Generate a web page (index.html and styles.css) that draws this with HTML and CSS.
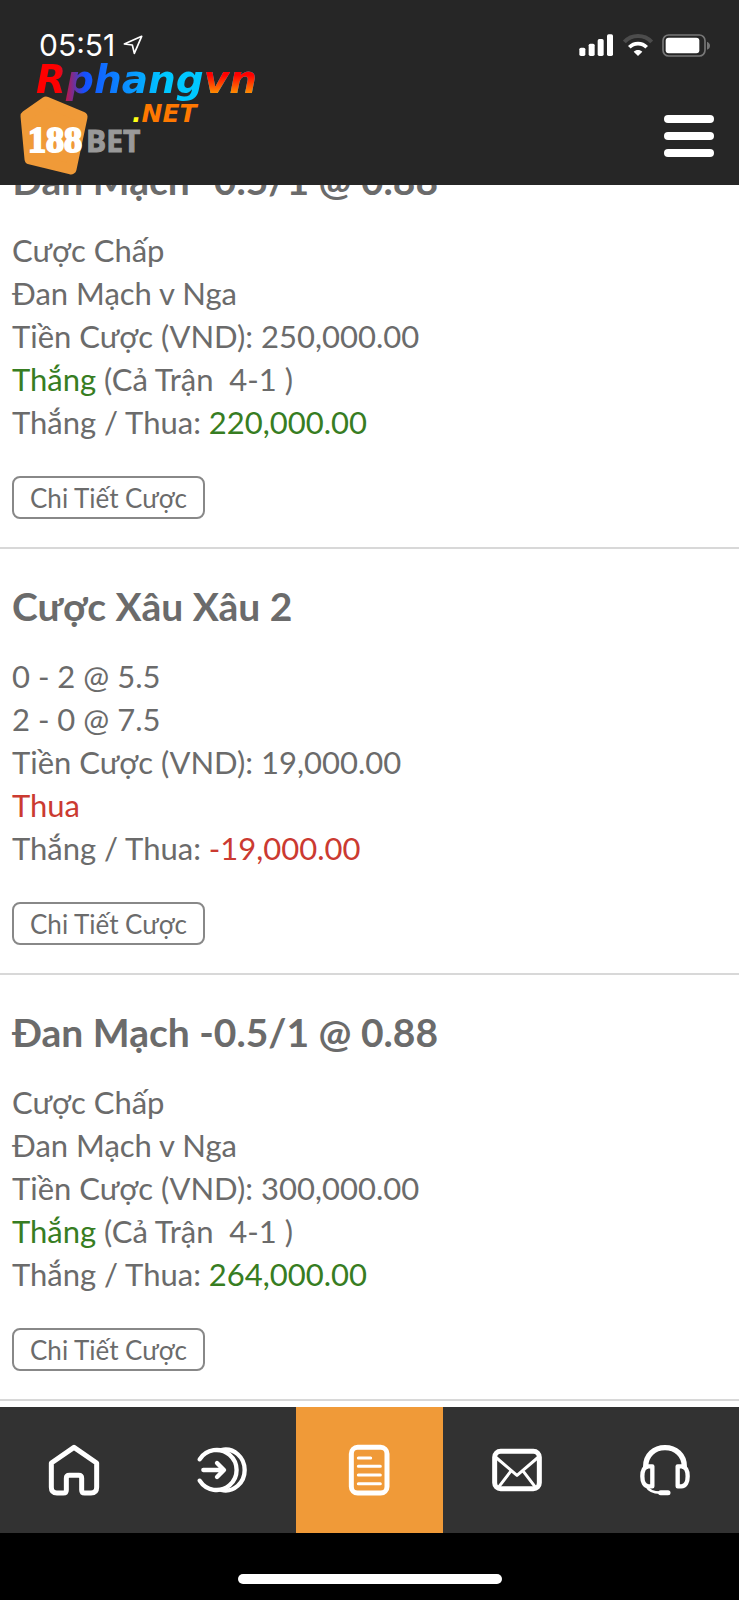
FILE: index.html
```
<!DOCTYPE html>
<html lang="vi">
<head>
    <title>188BET</title>
    <meta charset="UTF-8">
    <meta name="viewport" content="width=device-width, initial-scale=1.0">
    <link rel="stylesheet" href="styles.css">
</head>
<body>

<header class="header">
    <div class="status">
        <span class="clock">05:51</span>
        <svg class="location" viewBox="0 0 60 60" width="20" height="20"><path d="M56 4 L4 27 L28 30 L34 55 Z" fill="none" stroke="#fff" stroke-width="5" stroke-linejoin="round"/></svg>
        <div class="status-icons">
            <svg viewBox="0 0 105 66" width="35" height="22" fill="#fff">
                <rect x="1" y="41" width="18" height="25" rx="5"/>
                <rect x="29" y="29" width="18" height="37" rx="5"/>
                <rect x="56" y="15" width="18" height="51" rx="5"/>
                <rect x="84" y="1" width="18" height="65" rx="5"/>
            </svg>
            <svg viewBox="0 0 90 66" width="30" height="22">
                <path d="M4 24 C26 0 64 0 86 24" fill="none" stroke="#4c4c4c" stroke-width="12"/>
                <path d="M19 40 C33 25 57 25 71 40" fill="none" stroke="#fff" stroke-width="11"/>
                <path d="M45 66 L32 53 C39 46 51 46 58 53 Z" fill="#fff"/>
            </svg>
            <svg viewBox="0 0 147 69" width="49" height="23">
                <rect x="3" y="3" width="126" height="63" rx="17" fill="none" stroke="#777" stroke-width="5"/>
                <rect x="11" y="11" width="101" height="47" rx="9" fill="#fff"/>
                <path d="M135 23 C147 27 147 43 135 47 Z" fill="#777"/>
            </svg>
        </div>
    </div>
    <div class="brand-row">
        <a class="logo" href="#" aria-label="188BET">
            <svg viewBox="0 0 130 84" width="130" height="84">
                <path d="M26 8 L62 23 L51 75 L10 65 L6 22 Z" fill="#f09a38" stroke="#f09a38" stroke-width="11" stroke-linejoin="round"/>
                <text class="logo-num" x="8" y="58">188</text>
                <text class="logo-bet" x="66" y="58">BET</text>
            </svg>
        </a>
        <button class="menu" aria-label="Menu"><span></span><span></span><span></span></button>
    </div>
    <div class="watermark">
        <span class="wm-name">Rphang<b>vn</b></span>
        <span class="wm-net"><i>.</i>NET</span>
    </div>
</header>

<main class="bets">
    <div class="list">
        <article class="bet">
            <h2>Đan Mạch -0.5/1 @ 0.88</h2>
            <p>Cược Chấp</p>
            <p>Đan Mạch v Nga</p>
            <p>Tiền Cược (VND): 250,000.00</p>
            <p><span class="win">Thắng</span> (Cả Trận&nbsp; 4-1 )</p>
            <p>Thắng / Thua: <span class="win">220,000.00</span></p>
            <button class="detail">Chi Tiết Cược</button>
        </article>
        <article class="bet">
            <h2>Cược Xâu Xâu 2</h2>
            <p>0 - 2 @ 5.5</p>
            <p>2 - 0 @ 7.5</p>
            <p>Tiền Cược (VND): 19,000.00</p>
            <p><span class="lose">Thua</span></p>
            <p>Thắng / Thua: <span class="lose">-19,000.00</span></p>
            <button class="detail">Chi Tiết Cược</button>
        </article>
        <article class="bet">
            <h2>Đan Mạch -0.5/1 @ 0.88</h2>
            <p>Cược Chấp</p>
            <p>Đan Mạch v Nga</p>
            <p>Tiền Cược (VND): 300,000.00</p>
            <p><span class="win">Thắng</span> (Cả Trận&nbsp; 4-1 )</p>
            <p>Thắng / Thua: <span class="win">264,000.00</span></p>
            <button class="detail">Chi Tiết Cược</button>
        </article>
    </div>
</main>

<nav class="tabs">
    <a href="#" aria-label="Home">
        <svg viewBox="0 0 156 156" stroke-width="15">
            <path d="M78 10 L10 57 V130 Q10 147 27 147 H46 Q55 147 55 138 V103 Q55 94 64 94 H92 Q101 94 101 103 V138 Q101 147 110 147 H129 Q146 147 146 130 V57 Z"/>
        </svg>
    </a>
    <a href="#" aria-label="Login">
        <svg viewBox="0 0 156 156" stroke-width="13">
            <path d="M11 46 A60 60 0 1 1 11 110"/>
            <path d="M76 18 C114 10 146 40 146 78 C146 116 114 146 76 138"/>
            <path d="M22 78 H82 M63 57 L84 78 L63 99"/>
        </svg>
    </a>
    <a class="active" href="#" aria-label="Bets">
        <svg viewBox="0 0 156 156" stroke-width="15">
            <rect x="25" y="10" width="107" height="137" rx="19"/>
            <path d="M46 42 H83 M46 67 H112 M46 93 H112 M46 119 H112" stroke-width="9"/>
        </svg>
    </a>
    <a href="#" aria-label="Messages">
        <svg viewBox="0 0 156 156" stroke-width="15">
            <rect x="11" y="22" width="134" height="112" rx="18"/>
            <path d="M17 42 L78 94 L139 42 M24 128 L59 82 M132 128 L97 82" stroke-width="9"/>
        </svg>
    </a>
    <a href="#" aria-label="Support">
        <svg viewBox="0 0 156 156" stroke-width="13">
            <path d="M20 68 C20 33 46 11 78 11 C110 11 136 33 136 68" stroke-width="16"/>
            <path d="M40 67 H29 C16 67 10 80 10 97 C10 114 16 127 29 127 H40 Z"/>
            <path d="M116 67 H127 C140 67 146 80 146 97 C146 114 140 127 127 127 H116 Z"/>
            <path d="M24 128 C30 142 44 145 64 146" stroke-width="8"/>
            <path d="M65 146 H87" stroke-width="15"/>
        </svg>
    </a>
</nav>

<footer class="home-bar"><span></span></footer>

</body>
</html>
```

FILE: styles.css
```
* {
    box-sizing: border-box;
}

body {
    font-family: Lato, "Liberation Sans", sans-serif;
    margin: 0;
    display: flex;
    flex-direction: column;
    height: 100vh;
    background-color: #fff;
    color: #6b6b6b;
}

/* Header */
.header {
    position: relative;
    flex: none;
    padding-top: 28px;
    background-color: #262626;
}

.status {
    display: flex;
    align-items: center;
    height: 34px;
    padding: 0 28px 0 39px;
    color: #fff;
}

.clock {
    font-family: Inter, sans-serif;
    font-size: 30px;
    line-height: 34px;
}

.location {
    margin-left: 8px;
}

.status-icons {
    display: flex;
    align-items: center;
    gap: 9px;
    margin-left: auto;
}

.brand-row {
    display: flex;
    align-items: center;
    justify-content: space-between;
    padding: 32px 25px 7px 20px;
}

.logo svg {
    display: block;
}

.logo-num {
    font-family: "Liberation Serif", serif;
    font-weight: bold;
    font-size: 36px;
    fill: #fff;
    stroke: #fff;
    stroke-width: 2;
}

.logo-bet {
    font-family: "Open Sans", sans-serif;
    font-weight: bold;
    font-size: 30px;
    fill: #999;
    stroke: #999;
    stroke-width: 1;
}

.menu {
    display: flex;
    flex-direction: column;
    gap: 9px;
    width: 50px;
    padding: 0;
    border: none;
    background: none;
    cursor: pointer;
}

.menu span {
    height: 8px;
    width: 100%;
    border-radius: 4px;
    background-color: #fff;
}

/* Site stamp over the header */
.watermark {
    position: absolute;
    top: 56px;
    left: 36px;
    display: flex;
    flex-direction: column;
    font-family: "DejaVu Sans", sans-serif;
    font-style: italic;
    font-weight: bold;
}

.wm-name,
.wm-name b {
    font-size: 39px;
    line-height: 48px;
    background: linear-gradient(90deg, #f00 0 10%, #1450ff 22%, #00c8ff 58%);
    -webkit-background-clip: text;
    background-clip: text;
    color: transparent;
}

.wm-name b {
    background-image: linear-gradient(#f00 40%, #ff8c00 80%);
}

.wm-net {
    margin-left: 96px;
    font-size: 25px;
    line-height: 20px;
    color: #ff7800;
}

.wm-net i {
    color: #ffff14;
}

/* Bet list, opens scrolled to the last bet */
.bets {
    flex: 1;
    min-height: 0;
    display: flex;
    flex-direction: column-reverse;
    overflow-y: auto;
    scrollbar-width: none;
    padding-bottom: 6px;
}

.bet {
    padding: 33px 12px 28px;
    border-bottom: 2px solid #d8d8d8;
}

.bet h2 {
    margin: 0 0 25px;
    font-size: 39px;
    line-height: 48px;
}

.bet p {
    margin: 0;
    font-size: 31px;
    line-height: 43px;
}

.win {
    color: #377d22;
}

.lose {
    color: #cb3a31;
}

.detail {
    display: block;
    height: 43px;
    margin-top: 32px;
    padding: 0 16px;
    border: 2px solid #888;
    border-radius: 8px;
    background-color: #fff;
    color: #6b6b6b;
    font-family: inherit;
    font-size: 26px;
    cursor: pointer;
}

/* Bottom tabs */
.tabs {
    flex: none;
    display: flex;
    background-color: #323232;
}

.tabs a {
    flex: 1;
    display: flex;
    justify-content: center;
    padding: 37px 0;
}

.tabs .active {
    background-color: #f09a38;
}

.tabs svg {
    width: 52px;
    height: 52px;
    fill: none;
    stroke: #fff;
    stroke-linecap: round;
    stroke-linejoin: round;
}

.home-bar {
    flex: none;
    display: flex;
    justify-content: center;
    padding: 41px 0 16px;
    background-color: #000;
}

.home-bar span {
    width: 264px;
    height: 10px;
    border-radius: 5px;
    background-color: #fff;
}
```
